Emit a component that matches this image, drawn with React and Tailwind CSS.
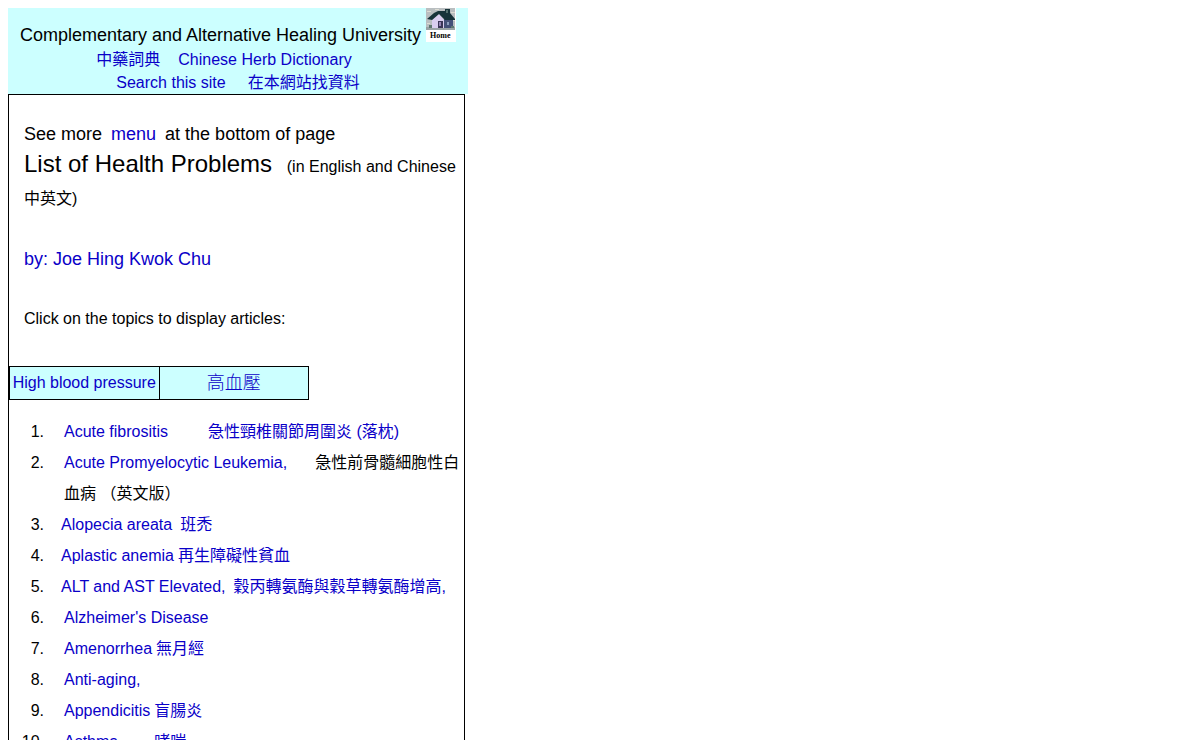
const topics = [
  { en: 'Acute fibrositis', zh: '急性頸椎關節周圍炎 (落枕)', gap: 'ml-10' },
  { en: 'Acute Promyelocytic Leukemia,', zh: '急性前骨髓細胞性白血病 （英文版）', gap: 'ml-7', plain: true },
  { en: 'Alopecia areata', zh: '班禿', gap: 'ml-2', tight: true },
  { en: 'Aplastic anemia', zh: '再生障礙性貧血', gap: 'ml-1', tight: true },
  { en: 'ALT and AST Elevated,', zh: '穀丙轉氨酶與穀草轉氨酶增高,', gap: 'ml-2', tight: true },
  { en: "Alzheimer's Disease" },
  { en: 'Amenorrhea', zh: '無月經', gap: 'ml-1' },
  { en: 'Anti-aging,' },
  { en: 'Appendicitis', zh: '盲腸炎', gap: 'ml-1' },
  { en: 'Asthma', zh: '哮喘', gap: 'ml-9' },
]

function HomeIcon() {
  return (
    <svg className="w-[30px] h-[34px]" viewBox="0 0 30 34" role="img" aria-label="Home">
      <rect width="30" height="34" fill="#fff" />
      <rect width="29" height="22" fill="#b9bec0" />
      <path d="M1 3h4v1H1zM9 1h4v1H9zM25 4h4v1h-4zM1 15h3v1H1zM26 12h3v1h-3z" fill="#dcdcd2" />
      <rect y="19" width="29" height="3" fill="#9aa3a5" />
      <path d="M6 12L13 6L18 12V20H6Z" fill="#d9cdef" />
      <path d="M18 11H27V20H18Z" fill="#455078" />
      <path d="M8 5L12 3H19V1H24V5L29 11V12H19L13 6L6 12L1 11Z" fill="#17343a" />
      <rect x="20" y="2" width="2" height="3" fill="#54716f" />
      <rect x="12" y="13" width="5" height="7" fill="#3b3557" />
      <rect x="13" y="14" width="2" height="4" fill="#9584b4" />
      <rect x="21" y="14" width="2" height="3" fill="#8b9cbd" />
      <path d="M3 17h3v3H3zM25 18h3v2h-3z" fill="#5f7870" />
      <text x="4" y="30" fontSize="8" fontWeight="bold" fontFamily="Liberation Serif" fill="#000">Home</text>
    </svg>
  )
}

function Header() {
  return (
    <header className="bg-[#ccffff] h-[86px] text-center">
      <div className="flex items-start justify-center gap-[5px] h-10">
        <span className="text-lg leading-[54px] text-black">Complementary and Alternative Healing University</span>
        <a href="#home"><HomeIcon /></a>
      </div>
      <div className="flex justify-center gap-[18px] leading-[23px] pr-7">
        <a href="#herbs">中藥詞典</a>
        <a href="#herbs-en">Chinese Herb Dictionary</a>
      </div>
      <div className="flex justify-center gap-[22px] leading-[23px]">
        <a href="#search">Search this site</a>
        <a href="#search-zh">在本網站找資料</a>
      </div>
    </header>
  )
}

function Topic({ topic, number }) {
  return (
    <li className={topic.tight ? 'flex gap-[17px]' : 'flex gap-5'}>
      <span className="w-[35px] shrink-0 text-right text-black">{number}.</span>
      <div>
        <a href="#topic">{topic.en}</a>
        {topic.zh && (
          topic.plain
            ? <span className={`${topic.gap} text-black`}>{topic.zh}</span>
            : <a href="#topic-zh" className={topic.gap}>{topic.zh}</a>
        )}
      </div>
    </li>
  )
}

export default function App() {
  return (
    <div className="p-2 pb-0 bg-white text-base text-[#0a00c8] font-['Liberation_Sans','Noto_Sans_CJK_TC',sans-serif]">
      <div className="w-full max-w-[460px]">
        <Header />
        <main className="mr-[3px] border border-b-0 border-black pt-[25px]">
          <div className="pl-[15px] text-black">
            <p className="text-lg leading-7">
              See more <a href="#menu" className="mx-1 text-[#0a00c8]">menu</a> at the bottom of page
            </p>
            <h1 className="text-2xl leading-8">
              List of Health Problems <span className="ml-2 text-base leading-6">(in English and Chinese<br />中英文)</span>
            </h1>
            <p className="mt-8 text-lg leading-[30px]">
              <a href="#author" className="text-[#0a00c8]">by: Joe Hing Kwok Chu</a>
            </p>
            <p className="mt-[30px] leading-[30px]">Click on the topics to display articles:</p>
          </div>
          <table className="mt-8 w-[300px] table-fixed border-collapse bg-[#ccffff] text-center">
            <tbody>
              <tr className="h-[33px]">
                <td className="border border-black p-0 whitespace-nowrap"><a href="#pressure">High blood pressure</a></td>
                <td className="border border-black p-0"><a href="#pressure-zh" className="text-lg leading-6 font-light">高血壓</a></td>
              </tr>
            </tbody>
          </table>
          <ol className="mt-4 leading-[31px]">
            {topics.map((topic, i) => (
              <Topic key={topic.en} topic={topic} number={i + 1} />
            ))}
          </ol>
        </main>
      </div>
    </div>
  )
}
